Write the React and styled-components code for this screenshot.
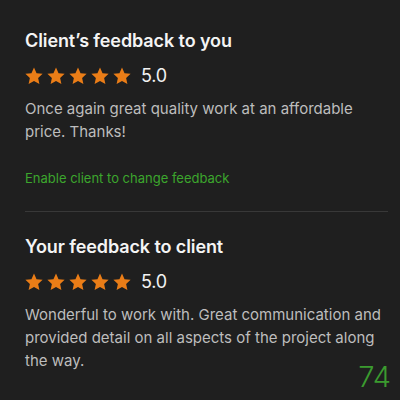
import styled, { createGlobalStyle } from "styled-components";

const GlobalStyle = createGlobalStyle`
  html, body {
    margin: 0;
    padding: 0;
    background: #1f1f1f;
  }
  body {
    font-family: Inter, "Liberation Sans", Arial, sans-serif;
    -webkit-font-smoothing: antialiased;
  }
`;

const Page = styled.div`
  width: 400px;
  height: 400px;
  box-sizing: border-box;
  padding: 29px 12px 0 25px;
  background: #1f1f1f;
  position: relative;
  overflow: hidden;
`;

const Section = styled.section`
  padding-bottom: ${(p) => (p.$last ? "0" : "25px")};
  border-bottom: ${(p) => (p.$last ? "none" : "1px solid #383838")};
  margin-bottom: ${(p) => (p.$last ? "0" : "23px")};
`;

const Title = styled.h2`
  margin: 0;
  font-size: 18px;
  font-weight: 600;
  color: #f4f4f4;
  line-height: 24px;
  letter-spacing: -0.1px;
`;

const RatingRow = styled.div`
  display: flex;
  align-items: center;
  margin-top: 12px;
`;

const Stars = styled.div`
  display: flex;
  gap: 4px;
`;

const Score = styled.span`
  margin-left: 10px;
  font-size: 18px;
  color: #f2f2f2;
  letter-spacing: -0.2px;
`;

const Body = styled.p`
  margin: 11px 0 0;
  font-size: 15px;
  line-height: 23px;
  color: #bdbdbd;
`;

const Link = styled.a`
  display: block;
  margin-top: 27px;
  font-size: 13px;
  color: #3ca62d;
  text-decoration: none;
`;

const Counter = styled.span`
  position: absolute;
  right: 9px;
  bottom: 9px;
  font-size: 29px;
  line-height: 1;
  font-weight: 300;
  color: #3b9b2f;
`;

function Star() {
  return (
    <svg width="18" height="18" viewBox="0 0 24 24">
      <path
        d="M12 0.8l3.4 7.4 8.1.9-6 5.5 1.7 8L12 18.5l-7.2 4.1 1.7-8-6-5.5 8.1-.9z"
        fill="#ea7d17"
      />
    </svg>
  );
}

function Rating({ value }) {
  return (
    <RatingRow>
      <Stars>
        {[0, 1, 2, 3, 4].map((i) => (
          <Star key={i} />
        ))}
      </Stars>
      <Score>{value.toFixed(1)}</Score>
    </RatingRow>
  );
}

export default function App() {
  return (
    <>
      <GlobalStyle />
      <Page>
        <Section>
          <Title>Client’s feedback to you</Title>
          <Rating value={5} />
          <Body>
            Once again great quality work at an affordable price. Thanks!
          </Body>
          <Link href="#">Enable client to change feedback</Link>
        </Section>
        <Section $last>
          <Title>Your feedback to client</Title>
          <Rating value={5} />
          <Body>
            Wonderful to work with. Great communication and provided detail on
            all aspects of the project along the way.
          </Body>
        </Section>
        <Counter>74</Counter>
      </Page>
    </>
  );
}
